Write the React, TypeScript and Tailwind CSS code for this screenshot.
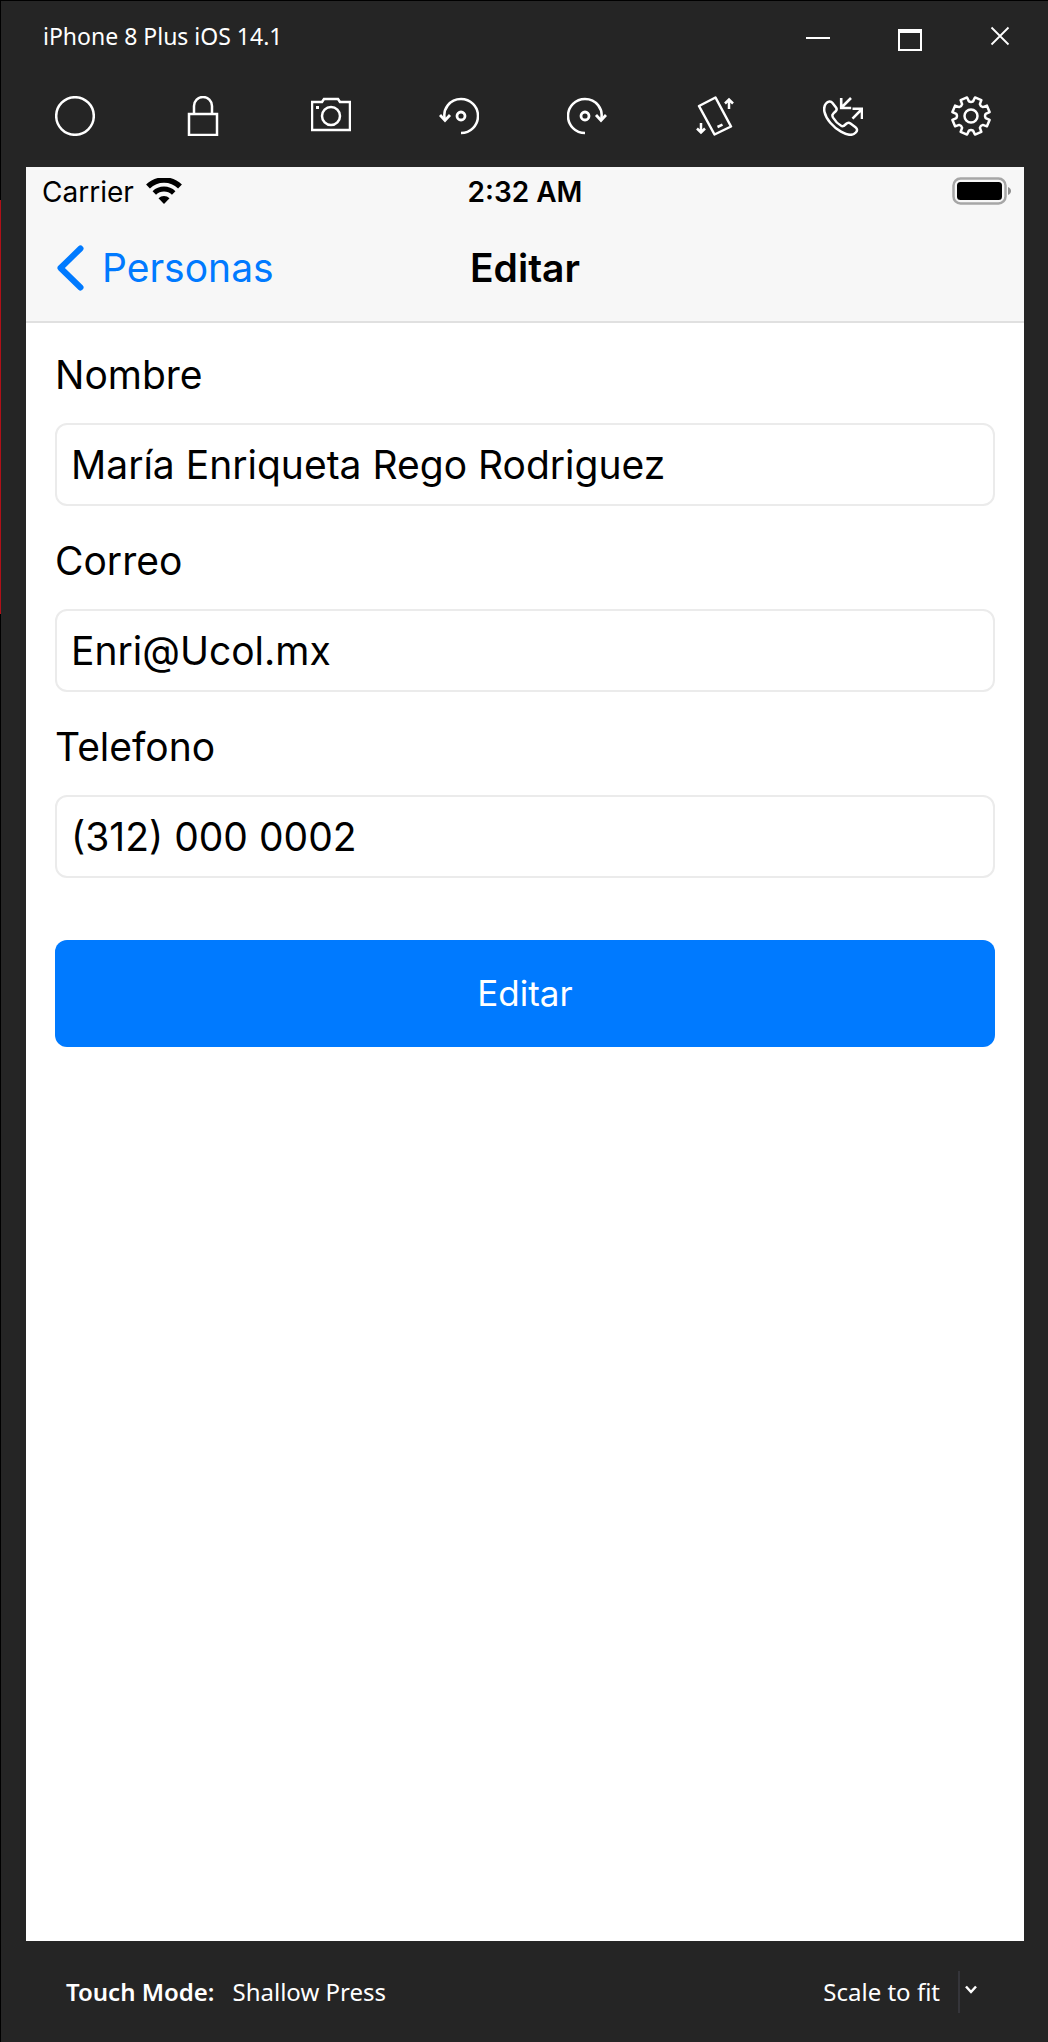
import type { ReactNode } from "react";

function Icon({ children }: { children: ReactNode }) {
  return (
    <svg viewBox="0 0 40 40" className="h-10 w-10" fill="none" stroke="white" strokeWidth="2.500" aria-hidden="true">
      {children}
    </svg>
  );
}

// Eight-toothed gear outline centred in a 40x40 box.
const gearPath =
  Array.from({ length: 8 }, (_, i) => {
    const at = (deg: number, r: number) => {
      const a = ((i * 45 + deg - 90) * Math.PI) / 180;
      return `${(20 + r * Math.cos(a)).toFixed(2)} ${(20 + r * Math.sin(a)).toFixed(2)}`;
    };
    return `${i === 0 ? "M" : "L"}${at(-12, 19)}L${at(-8, 14.8)}Q${at(0, 13.4)} ${at(8, 14.8)}L${at(12, 19)}`;
  }).join("") + "Z";

const tools: { label: string; icon: ReactNode }[] = [
  { label: "Home", icon: <circle cx="20" cy="20" r="18.800" /> },
  {
    label: "Lock",
    icon: (
      <>
        <rect x="6" y="18" width="28" height="21" />
        <path d="M11 18v-8a9 9 0 0 1 18 0v8" />
      </>
    ),
  },
  {
    label: "Screenshot",
    icon: (
      <>
        <path d="M1 6h10l2-3h14l2 3h10v28H1z" />
        <circle cx="20" cy="20" r="9" />
        <path d="M5 11.500h3" strokeWidth="3" />
      </>
    ),
  },
  {
    label: "Rotate left",
    icon: (
      <>
        <path d="M6 24C3 13 11 3 22 3a17 17 0 0 1 0 34" />
        <path d="M1 19l5 5.500 5-5.500" strokeWidth="2.800" />
        <circle cx="22" cy="20" r="4" strokeWidth="2.800" />
      </>
    ),
  },
  {
    label: "Rotate right",
    icon: (
      <>
        <path d="M34 24C37 13 29 3 18 3a17 17 0 0 0 0 34" />
        <path d="M39 19l-5 5.500-5-5.500" strokeWidth="2.800" />
        <circle cx="18" cy="20" r="4" strokeWidth="2.800" />
      </>
    ),
  },
  {
    label: "Shake",
    icon: (
      <>
        <path d="M4 10 20.500 1.500 36 30.500 19.500 38.500z" strokeLinejoin="round" />
        <path d="M22.500 31l5-2.300M34 13V3.500M30 7.500l4-4 4 4M6 27v10M2 32.500l4 4 4-4" />
      </>
    ),
  },
  {
    label: "Toggle call status bar",
    icon: (
      <>
        <path d="M3 7.500C5 5 8 5 9.500 7l3.500 4.500c1 1.500.8 2.700-.3 3.800C9 18.500 8.800 19 10 21.500c2 3.500 5 6.500 8.500 8.500 1.500.8 2.500 0 4.500-2 1.500-1.500 3-1.700 4.500-.6l5 3.800c2 1.600 2 3.500.3 5.300-3 3.300-9 2.500-14.800-.8C10 31 3 23 1.500 16 .8 12.500 1 9.800 3 7.500z" />
        <path d="M18.200 2v10h10M28 2l-9.500 9.500M29.500 12.800h9.500V23M39 13l-9.500 9.700" strokeWidth="2.600" />
      </>
    ),
  },
  {
    label: "Settings",
    icon: (
      <>
        <path d={gearPath} strokeLinejoin="round" />
        <circle cx="20" cy="20" r="6.500" />
      </>
    ),
  },
];

const fields = [
  { id: "nombre", label: "Nombre", type: "text", value: "María Enriqueta Rego Rodriguez" },
  { id: "correo", label: "Correo", type: "email", value: "Enri@Ucol.mx" },
  { id: "telefono", label: "Telefono", type: "tel", value: "(312) 000 0002" },
];

function TitleBar() {
  return (
    <header className="flex h-[70px] items-center justify-between pl-[42px] pr-[38px]">
      <h1 className="text-[23px] leading-8">iPhone 8 Plus iOS 14.1</h1>
      <div className="flex items-center gap-[68px]">
        <button type="button" aria-label="Minimize" className="flex h-6 w-6 items-center">
          <span className="mt-1 h-[2px] w-full bg-white" />
        </button>
        <button type="button" aria-label="Maximize" className="mt-2 h-[22px] w-6 border-2 border-t-4 border-white" />
        <button type="button" aria-label="Close">
          <svg viewBox="0 0 20 20" className="h-5 w-5" stroke="white" strokeWidth="1.800" aria-hidden="true">
            <path d="M1.500 1.500l17 17M18.500 1.500l-17 17" />
          </svg>
        </button>
      </div>
    </header>
  );
}

function StatusBar() {
  return (
    <div className="grid h-[50px] grid-cols-3 items-center px-3 text-[28px] leading-8">
      <div className="flex items-center gap-3 pl-1">
        <span>Carrier</span>
        <svg viewBox="0 0 36 28" className="h-7 w-9" fill="none" stroke="black" aria-label="Wi-Fi">
          <path d="M2 8.500a23 23 0 0 1 32 0" strokeWidth="5.500" />
          <path d="M8.300 15a14 14 0 0 1 19.400 0" strokeWidth="5" />
          <path d="M12.500 20.300a8 8 0 0 1 11 0L18 26z" fill="black" stroke="none" />
        </svg>
      </div>
      <span className="text-center font-semibold">2:32 AM</span>
      <svg viewBox="0 0 60 30" className="h-[30px] w-[60px] justify-self-end" aria-label="Battery full">
        <rect x="1.500" y="1.500" width="52" height="25" rx="7" fill="none" stroke="#a6a6a6" strokeWidth="2.500" />
        <rect x="5" y="5" width="45" height="18" rx="3.500" fill="black" />
        <path d="M56 10c4 1.500 4 6.500 0 8z" fill="#8e8e8e" />
      </svg>
    </div>
  );
}

function NavBar() {
  return (
    <nav className="grid h-[106px] grid-cols-[1fr_auto_1fr] items-center border-b-2 border-[#e0e0e0] px-[30px] pb-[2px] text-[39px] leading-[48px]">
      <a href="#personas" className="flex items-center gap-[18px] justify-self-start text-[#007aff]">
        <svg viewBox="0 0 28 48" className="h-12 w-7" fill="none" stroke="#007aff" strokeWidth="6" strokeLinecap="round" strokeLinejoin="round" aria-hidden="true">
          <path d="M24.500 4.500 4.500 24l20 19.500" />
        </svg>
        Personas
      </a>
      <h2 className="font-semibold">Editar</h2>
    </nav>
  );
}

export default function App() {
  return (
    <div className="flex min-h-screen border-t border-black bg-[#252525] font-['Noto_Sans',sans-serif] text-white">
      <div className="flex w-px flex-col bg-black">
        <div className="mt-[199px] h-[414px] bg-[#b01018]" />
      </div>
      <div className="flex min-w-0 flex-1 flex-col">
        <TitleBar />
        <div role="toolbar" aria-label="Simulator" className="flex h-24 items-center justify-between pb-[6px] pl-[54px] pr-[57px]">
          {tools.map((tool) => (
            <button key={tool.label} type="button" aria-label={tool.label}>
              <Icon>{tool.icon}</Icon>
            </button>
          ))}
        </div>
        <main className="ml-[25px] mr-6 flex flex-1 flex-col bg-white font-['Inter',sans-serif] text-black">
          <div className="bg-[#f7f7f7]">
            <StatusBar />
            <NavBar />
          </div>
          <form className="flex flex-col px-[29px] pt-7" onSubmit={(e) => e.preventDefault()}>
            <div className="flex flex-col gap-[31px]">
              {fields.map((field) => (
                <div key={field.id} className="flex flex-col gap-6 text-[39px] leading-[48px]">
                  <label htmlFor={field.id}>{field.label}</label>
                  <input
                    id={field.id}
                    type={field.type}
                    defaultValue={field.value}
                    className="h-[83px] w-full rounded-xl border-2 border-[#ebebeb] px-[14px] outline-none"
                  />
                </div>
              ))}
            </div>
            <button type="submit" className="mt-[62px] h-[107px] rounded-xl bg-[#007aff] text-[35px] text-white">
              Editar
            </button>
          </form>
        </main>
        <footer className="flex h-[101px] items-center justify-between pl-[65px] pr-[71px] text-2xl">
          <p className="flex gap-[18px]">
            <span className="font-semibold">Touch Mode:</span>
            <span>Shallow Press</span>
          </p>
          <button type="button" className="flex items-center">
            <span>Scale to fit</span>
            <span className="ml-[18px] h-[42px] w-[2px] bg-[#35353a]" />
            <svg viewBox="0 0 12 10" className="mb-1 ml-[5px] h-[10px] w-3" fill="none" stroke="white" strokeWidth="2.500" aria-hidden="true">
              <path d="M1 1.500l5 5.500 5-5.500" />
            </svg>
          </button>
        </footer>
      </div>
    </div>
  );
}
